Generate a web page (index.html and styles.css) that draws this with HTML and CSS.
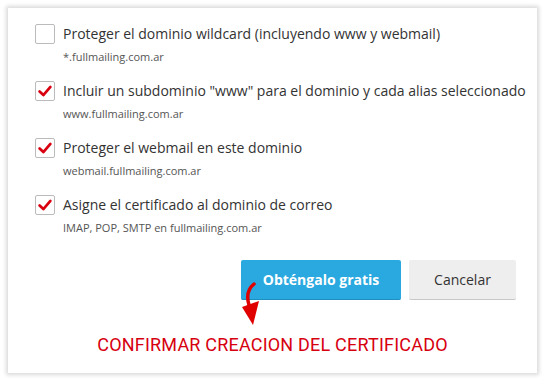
FILE: index.html
```html
<!DOCTYPE html>
<html lang="es">
<head>
  <meta charset="UTF-8">
  <title>Certificado SSL</title>
  <link rel="stylesheet" href="styles.css">
</head>
<body>

<div class="card">
  <div class="option">
    <span class="box"></span>
    <div class="text">
      <div class="label">Proteger el dominio wildcard (incluyendo www y webmail)</div>
      <div class="hint">*.fullmailing.com.ar</div>
    </div>
  </div>
  <div class="option">
    <span class="box checked"><svg viewBox="0 0 20 20"><path d="M4 10.5 L8.2 14.5 L16 5.5" /></svg></span>
    <div class="text">
      <div class="label">Incluir un subdominio "www" para el dominio y cada alias seleccionado</div>
      <div class="hint">www.fullmailing.com.ar</div>
    </div>
  </div>
  <div class="option">
    <span class="box checked"><svg viewBox="0 0 20 20"><path d="M4 10.5 L8.2 14.5 L16 5.5" /></svg></span>
    <div class="text">
      <div class="label">Proteger el webmail en este dominio</div>
      <div class="hint">webmail.fullmailing.com.ar</div>
    </div>
  </div>
  <div class="option">
    <span class="box checked"><svg viewBox="0 0 20 20"><path d="M4 10.5 L8.2 14.5 L16 5.5" /></svg></span>
    <div class="text">
      <div class="label">Asigne el certificado al dominio de correo</div>
      <div class="hint">IMAP, POP, SMTP en fullmailing.com.ar</div>
    </div>
  </div>

  <div class="actions">
    <button class="btn primary">Obténgalo gratis</button>
    <button class="btn">Cancelar</button>
  </div>

  <!-- flecha roja sobre el botón -->
  <svg class="arrow" viewBox="0 0 30 50">
    <path class="shaft" d="M16 4 C11 8 8 15 11 25" />
    <path class="head" d="M4 27 L21 21 L15 45 Z" />
  </svg>

  <div class="note">CONFIRMAR CREACION DEL CERTIFICADO</div>
</div>

</body>
</html>
```

FILE: styles.css
```css
body {
  margin: 0;
  background: #fff;
  font-family: "Open Sans", Arial, sans-serif;
}
.card {
  position: relative;
  margin: 8px 10px 11px 8px;
  height: 365px;
  box-sizing: border-box;
  background: #fff;
  box-shadow: 0 0 4px 2px rgba(0,0,0,0.15);
  padding: 16px 0 0 27px;
}
.option {
  display: flex;
  align-items: flex-start;
  height: 57px;
}
.box {
  width: 20px;
  height: 20px;
  box-sizing: border-box;
  border: 1px solid #bbb;
  border-radius: 2px;
  flex-shrink: 0;
}
.box svg {
  display: block;
  width: 18px;
  height: 18px;
}
.box path {
  fill: none;
  stroke: #d90010;
  stroke-width: 3;
  stroke-linecap: round;
  stroke-linejoin: round;
}
.text {
  margin-left: 8px;
}
.label {
  font-size: 14px;
  color: #333;
  line-height: 20px;
}
.hint {
  font-size: 11px;
  color: #555;
  margin-top: 5px;
}
.actions {
  display: flex;
  justify-content: flex-end;
  gap: 8px;
  margin-top: 8px;
  padding-right: 21px;
}
.btn {
  height: 40px;
  padding: 0;
  border: none;
  border-bottom: 1px solid #c8c8c8;
  border-radius: 2px;
  background: #eee;
  color: #333;
  font-family: "Open Sans", Arial, sans-serif;
  font-size: 14px;
  white-space: nowrap;
  width: 107px;
  cursor: pointer;
}
.btn.primary {
  width: 160px;
  background: #29a9df;
  border-bottom-color: #1f8fc0;
  color: #fff;
  font-weight: bold;
}
.arrow {
  position: absolute;
  left: 230px;
  top: 272px;
  width: 30px;
  height: 50px;
}
.arrow .shaft {
  fill: none;
  stroke: #e00000;
  stroke-width: 3.5;
  stroke-linecap: round;
}
.arrow .head {
  fill: #e00000;
}
.note {
  margin-top: 34px;
  margin-left: -27px;
  text-align: center;
  color: #d7000f;
  font-family: "Roboto", Arial, sans-serif;
  font-size: 18px;
  letter-spacing: 0.2px;
}
```
